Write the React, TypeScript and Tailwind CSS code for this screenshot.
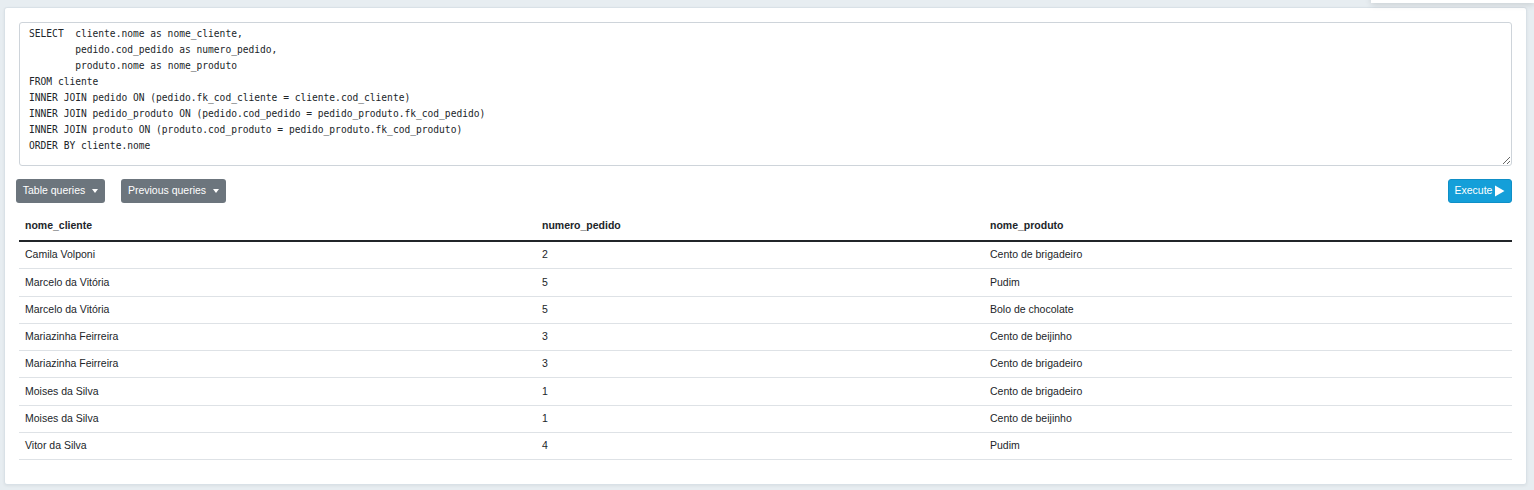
import React from "react";

const sql = `SELECT  cliente.nome as nome_cliente,
        pedido.cod_pedido as numero_pedido,
        produto.nome as nome_produto
FROM cliente
INNER JOIN pedido ON (pedido.fk_cod_cliente = cliente.cod_cliente)
INNER JOIN pedido_produto ON (pedido.cod_pedido = pedido_produto.fk_cod_pedido)
INNER JOIN produto ON (produto.cod_produto = pedido_produto.fk_cod_produto)
ORDER BY cliente.nome`;

const rows: [string, string, string][] = [
  ["Camila Volponi", "2", "Cento de brigadeiro"],
  ["Marcelo da Vitória", "5", "Pudim"],
  ["Marcelo da Vitória", "5", "Bolo de chocolate"],
  ["Mariazinha Feirreira", "3", "Cento de beijinho"],
  ["Mariazinha Feirreira", "3", "Cento de brigadeiro"],
  ["Moises da Silva", "1", "Cento de brigadeiro"],
  ["Moises da Silva", "1", "Cento de beijinho"],
  ["Vitor da Silva", "4", "Pudim"],
];

function Caret() {
  return <span className="ml-[7px] inline-block h-0 w-0 border-x-[3.5px] border-t-[4px] border-x-transparent border-t-white align-middle" />;
}

export default function App() {
  return (
    <div className="relative h-[490px] w-[1534px] overflow-hidden bg-[#e7edf1] font-['Liberation_Sans',Arial,sans-serif] text-[10.5px] text-[#212529]">
      <div className="absolute right-0 top-[-10px] h-[13px] w-[163px] bg-white shadow-[0_2px_6px_rgba(0,0,0,0.12)]" />
      <div className="ml-[4px] mt-[7px] h-[478px] w-[1523px] rounded-[3px] border border-[#d9e1e7] bg-white px-[14px] pt-[14px] shadow-[0_1px_3px_rgba(0,0,0,0.06)]">
        <textarea
          readOnly
          defaultValue={sql}
          spellCheck={false}
          className="block h-[144px] w-[1493px] rounded-[3px] border border-[#ced4da] bg-white px-[9px] pt-[3px] font-['DejaVu_Sans_Mono',monospace] text-[9.6px] leading-[16px] text-[#212529] outline-none"
        />
        <div className="ml-[-3px] mt-[13px] flex h-[24px] w-[1496px] items-center">
          <button className="flex h-[24px] w-[89px] items-center justify-center rounded-[3px] bg-[#6c757d] text-[10.5px] text-white">
            Table queries<Caret />
          </button>
          <button className="ml-[16px] flex h-[24px] w-[105px] items-center justify-center rounded-[3px] bg-[#6c757d] text-[10.5px] text-white">
            Previous queries<Caret />
          </button>
          <div className="flex-1" />
          <button className="flex h-[24px] w-[64px] items-center justify-center rounded-[3px] border border-[#0f8fc7] bg-[#149fd9] text-[10.5px] text-white">
            Execute
            <svg width="11" height="12" viewBox="0 0 11 12" className="ml-[2px]">
              <path d="M1 0.5 L10.5 6 L1 11.5 Z" fill="white" />
            </svg>
          </button>
        </div>
        <div className="mt-[8px] w-[1493px]">
          <div className="grid h-[31px] grid-cols-[517px_448px_528px] items-center border-b-2 border-[#212529] pt-[1px] font-bold">
            <div className="pl-[6px]">nome_cliente</div>
            <div className="pl-[6px]">numero_pedido</div>
            <div className="pl-[6px]">nome_produto</div>
          </div>
          {rows.map((r, i) => (
            <div key={i} className="grid h-[27.3px] grid-cols-[517px_448px_528px] items-center border-b border-[#dee2e6]">
              <div className="pl-[6px]">{r[0]}</div>
              <div className="pl-[6px]">{r[1]}</div>
              <div className="pl-[6px]">{r[2]}</div>
            </div>
          ))}
        </div>
      </div>
    </div>
  );
}
